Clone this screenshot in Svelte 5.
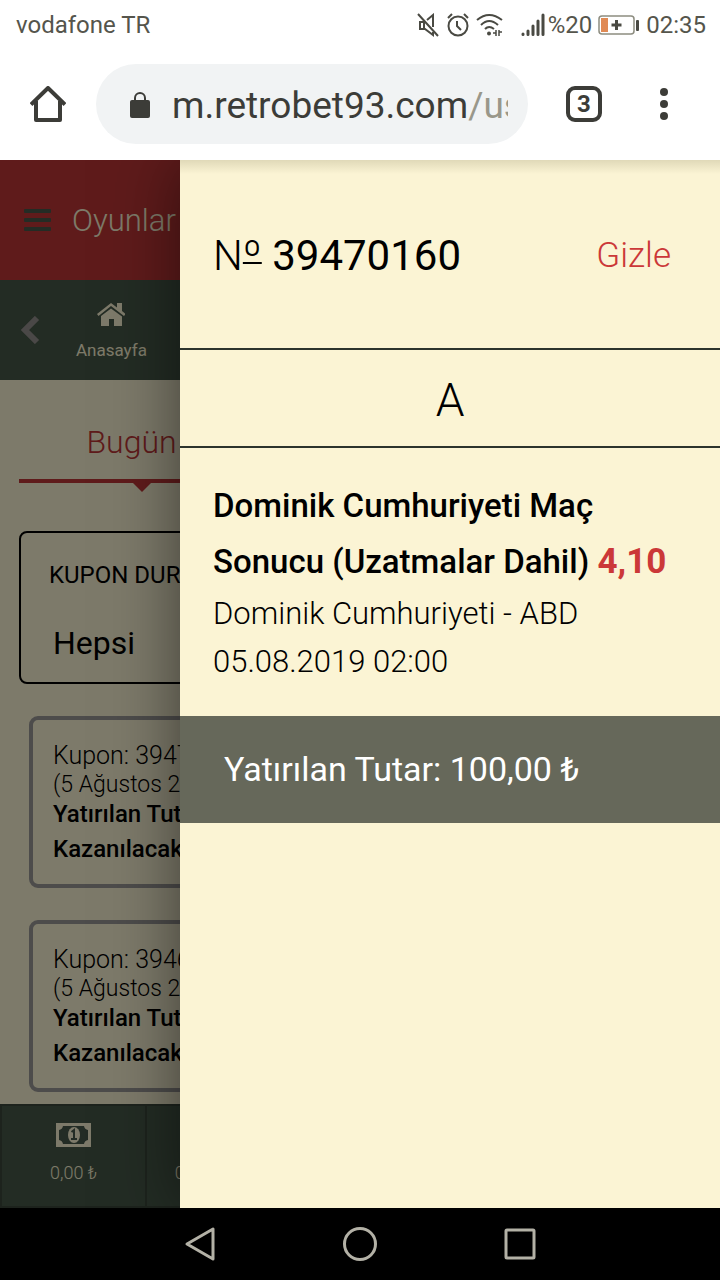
<script>
	let status = $state('Hepsi');

	const coupons = [
		{ id: '39470160', date: '5 Ağustos 2019' },
		{ id: '39469822', date: '5 Ağustos 2019' }
	];
</script>

<div class="screen">
	<div class="status-bar">
		<span>vodafone TR</span>
		<div class="status-icons">
			<svg width="24" height="24" viewBox="0 0 24 24" fill="none" stroke="#4a4a43" stroke-width="2">
				<path d="M2 1L22 23M11 7L17 2V14M17 19V22L9 16H4V9H8V15" />
			</svg>
			<svg width="24" height="24" viewBox="0 0 24 24" fill="none" stroke="#4a4a43" stroke-width="2">
				<circle cx="12" cy="13" r="9.5" />
				<path d="M11 8V13L15 17M2 5L6 1M22 5L18 1" />
			</svg>
			<svg width="28" height="24" viewBox="0 0 28 24" fill="none" stroke="#4a4a43" stroke-width="2">
				<path d="M1 7Q13 -3 26 7M5 12Q13 4 22 12M9 16Q13 12 18 16" />
				<circle cx="13" cy="20.5" r="2" fill="#4a4a43" stroke="none" />
				<path d="M20 17V23M17 20H20M23 17V23M23 19H26" stroke-width="1.5" />
			</svg>
			<svg class="signal" width="24" height="24" viewBox="0 0 24 24" fill="none" stroke="#4a4a43" stroke-width="3" stroke-linecap="round">
				<path d="M2 21V21.5M7 18V21.5M12 13V21.5M17 8V21.5M22 2V21.5" />
			</svg>
			<span class="percent">%20</span>
			<svg width="42" height="22" viewBox="0 0 42 22">
				<rect x="1" y="2" width="35" height="18" rx="3" fill="#fff" stroke="#8d8d80" stroke-width="1.5" />
				<rect x="3" y="4" width="7" height="14" fill="#e08a55" />
				<path d="M18.500 6V16M13.500 11H23.500" stroke="#4a4a43" stroke-width="3" />
				<rect x="38" y="6" width="3" height="11" rx="1" fill="#4a4a43" />
			</svg>
			<span>02:35</span>
		</div>
	</div>

	<div class="toolbar">
		<button class="icon-btn" aria-label="Home">
			<svg width="36" height="36" viewBox="0 0 36 36" fill="none" stroke="#3c3c38" stroke-width="4" stroke-linejoin="round">
				<path d="M1 18.500L18 2L35 18.500" />
				<path d="M6 15V34H30V15" />
			</svg>
		</button>
		<a class="address" href="#top">
			<svg width="20" height="26" viewBox="0 0 20 26">
				<path d="M5 9V6A5 5 0 0 1 15 6V9" fill="none" stroke="#3c3c38" stroke-width="2" />
				<rect y="8" width="20" height="18" rx="2" fill="#3c3c38" />
			</svg>
			<span class="url">m.retrobet93.com<span>/us</span></span>
		</a>
		<button class="tabs-count" aria-label="Open tabs">3</button>
		<button class="menu" aria-label="Menu">
			<svg width="8" height="32" viewBox="0 0 8 32" fill="#3c3c38">
				<circle cx="4" cy="4" r="4" />
				<circle cx="4" cy="16" r="4" />
				<circle cx="4" cy="28" r="4" />
			</svg>
		</button>
	</div>

	<main>
		<div class="page">
			<header>
				<svg width="28" height="24" viewBox="0 0 28 24" fill="#46584a">
					<rect y="1" width="27" height="4" rx="1" />
					<rect y="10" width="27" height="4" rx="1" />
					<rect y="19" width="27" height="4" rx="1" />
				</svg>
				<a href="#games">Oyunlar</a>
			</header>

			<nav class="sub-nav">
				<svg width="20" height="28" viewBox="0 0 20 28" fill="none" stroke="#94908e" stroke-width="6">
					<path d="M17 2L5 14L17 26" />
				</svg>
				<a href="#home">
					<svg width="28" height="24" viewBox="0 0 28 24" fill="#fbf4d4">
						<path d="M0 11L14 0L20 4.500V0H25V8L28.500 11L27 13L14 3L1.500 13Z" />
						<path d="M4 13L14 5.500L25 13.500V23H17V16H12V23H4Z" />
					</svg>
					Anasayfa
				</a>
			</nav>

			<div class="day-tabs">
				<a class="active" href="#today">Bugün</a>
			</div>

			<div class="filter">
				<label for="coupon-status">KUPON DURUMU</label>
				<select id="coupon-status" bind:value={status}>
					<option>Hepsi</option>
				</select>
			</div>

			{#each coupons as coupon}
				<section class="coupon">
					<p>Kupon: {coupon.id}</p>
					<p class="date">({coupon.date})</p>
					<p class="strong">Yatırılan Tutar:</p>
					<p class="strong">Kazanılacak:</p>
				</section>
			{/each}

			<footer>
				<a href="#balance">
					<svg width="35" height="24" viewBox="0 0 35 24">
						<rect width="35" height="24" fill="#fbf4d4" />
						<path d="M7 3H28A5 5 0 0 0 32 7V17A5 5 0 0 0 28 21H7A5 5 0 0 0 3 17V7A5 5 0 0 0 7 3Z" fill="#46584a" />
						<ellipse cx="18" cy="12" rx="6" ry="8" fill="#fbf4d4" />
						<path d="M15.500 9L18 7V16M15 16H21" fill="none" stroke="#46584a" stroke-width="2" />
					</svg>
					0,00 ₺
				</a>
				<a href="#bonus">
					<svg width="35" height="24" viewBox="0 0 35 24"></svg>
					0,00 Bonus
				</a>
			</footer>
		</div>

		<div class="backdrop"></div>

		<aside>
			<div class="slip-head">
				<h1><span>N<u>º</u></span> 39470160</h1>
				<button>Gizle</button>
			</div>
			<div class="group">A</div>
			<div class="bet">
				<h2>Dominik Cumhuriyeti Maç Sonucu (Uzatmalar Dahil) <b>4,10</b></h2>
				<p>Dominik Cumhuriyeti - ABD</p>
				<p>05.08.2019 02:00</p>
			</div>
			<div class="stake">Yatırılan Tutar: 100,00 ₺</div>
		</aside>
	</main>

	<div class="android-nav">
		<button aria-label="Back">
			<svg width="36" height="36" viewBox="0 0 36 36"><path d="M5 18L31 3V33Z" /></svg>
		</button>
		<button aria-label="Home screen">
			<svg width="36" height="36" viewBox="0 0 36 36"><circle cx="18" cy="18" r="15.500" /></svg>
		</button>
		<button aria-label="Recent apps">
			<svg width="36" height="36" viewBox="0 0 36 36"><rect x="4" y="4" width="28" height="28" rx="1" /></svg>
		</button>
	</div>
</div>

<style>
	:global(body) {
		margin: 0;
	}

	.screen {
		display: flex;
		flex-direction: column;
		min-height: 100vh;
		background: #fff;
		font-family: Roboto, "Liberation Sans", sans-serif;
		color: #000;
	}

	a {
		color: inherit;
		text-decoration: none;
	}

	button {
		padding: 0;
		border: 0;
		background: none;
		font-family: inherit;
	}

	svg {
		display: block;
		flex-shrink: 0;
	}

	h1,
	h2,
	p {
		margin: 0;
	}

	.status-bar {
		display: flex;
		align-items: center;
		justify-content: space-between;
		height: 48px;
		padding: 2px 14px 0 16px;
		box-sizing: border-box;
		font-size: 24px;
		color: #55554c;
	}

	.status-icons {
		display: flex;
		align-items: center;
		gap: 6px;
	}

	.signal {
		margin-left: 11px;
	}

	.percent {
		margin-left: -3px;
	}

	.toolbar {
		display: flex;
		align-items: center;
		height: 112px;
		padding-left: 30px;
	}

	.address {
		display: flex;
		flex: 1;
		align-items: center;
		gap: 22px;
		height: 80px;
		min-width: 0;
		margin: 0 38px 0 30px;
		padding: 2px 20px 0 34px;
		box-sizing: border-box;
		border-radius: 40px;
		background: #f1f3f4;
	}

	.url {
		flex: 1;
		font-size: 37px;
		color: #3c3c38;
		white-space: nowrap;
		overflow: hidden;
	}

	.url span {
		color: #99978a;
	}

	.tabs-count {
		display: flex;
		align-items: center;
		justify-content: center;
		width: 36px;
		height: 36px;
		border: 4px solid #3c3c38;
		border-radius: 9px;
		font-size: 24px;
		font-weight: 700;
		color: #3c3c38;
	}

	.menu {
		padding: 0 52px 0 58px;
	}

	main {
		position: relative;
		display: flex;
		flex: 1;
		overflow: hidden;
	}

	.page {
		display: flex;
		flex: 1;
		flex-direction: column;
		min-width: 0;
		background: #fbf4d4;
		white-space: nowrap;
	}

	header {
		display: flex;
		align-items: center;
		gap: 20px;
		height: 120px;
		padding-left: 24px;
		background: #be3636;
		font-size: 31px;
		font-weight: 300;
		color: #fbf4d4;
	}

	.sub-nav {
		display: flex;
		align-items: center;
		gap: 36px;
		height: 100px;
		padding-left: 20px;
		background: #465848;
	}

	.sub-nav a {
		display: flex;
		flex-direction: column;
		align-items: center;
		gap: 12px;
		padding-top: 4px;
		font-size: 17px;
		line-height: 22px;
		color: #fbf4d4;
	}

	.day-tabs {
		display: flex;
		margin: 0 19px;
		border-bottom: 4px solid #be3636;
	}

	.day-tabs a {
		position: relative;
		flex: 0 0 33%;
		height: 99px;
		line-height: 124px;
		text-align: center;
		font-size: 32px;
		font-weight: 300;
		color: #be3636;
	}

	.day-tabs .active::after {
		content: '';
		position: absolute;
		top: 102px;
		left: 50%;
		border: 10px solid transparent;
		border-top-color: #be3636;
	}

	.filter {
		display: flex;
		flex-direction: column;
		gap: 30px;
		margin: 48px 19px 32px;
		padding: 26px 28px 17px;
		border: 2px solid #000;
		border-radius: 8px;
	}

	.filter label {
		font-size: 24px;
		line-height: 32px;
	}

	.filter select {
		appearance: none;
		padding: 0 4px;
		border: 0;
		background: none;
		font-family: inherit;
		font-size: 32px;
		line-height: 44px;
		color: #000;
	}

	.coupon {
		margin: 0 29px 32px;
		padding: 18px 20px 17px;
		border: 4px solid #9a9896;
		border-radius: 9px;
		font-size: 25px;
		font-weight: 300;
		line-height: 35px;
	}

	.coupon:last-of-type {
		margin-bottom: 11px;
	}

	.coupon .date {
		font-size: 23px;
		line-height: 24px;
	}

	.coupon .strong {
		font-size: 24px;
		font-weight: 500;
	}

	footer {
		display: flex;
		gap: 2px;
		height: 104px;
		margin-top: auto;
		padding: 2px;
		box-sizing: border-box;
		background: #3a463a;
	}

	footer a {
		display: flex;
		flex: 0 0 20%;
		flex-direction: column;
		align-items: center;
		justify-content: center;
		gap: 16px;
		padding-bottom: 6px;
		box-sizing: border-box;
		background: #465848;
		font-size: 18px;
		font-weight: 300;
		line-height: 20px;
		color: #fbf4d4;
	}

	.backdrop {
		position: absolute;
		inset: 0;
		background: rgba(0, 0, 0, 0.5);
	}

	aside {
		position: absolute;
		inset: 0 0 0 25%;
		background: linear-gradient(#e0d9b8, #fbf4d4 14px);
		box-shadow: 0 0 64px rgba(0, 0, 0, 0.5);
	}

	.slip-head {
		display: flex;
		align-items: center;
		justify-content: space-between;
		height: 188px;
		padding: 2px 49px 0 33px;
		box-sizing: border-box;
	}

	.slip-head h1 {
		font-size: 42px;
		font-weight: 400;
	}

	.slip-head h1 span {
		font-weight: 300;
	}

	.slip-head u {
		text-decoration-thickness: 2px;
		text-underline-offset: -8px;
		text-decoration-skip-ink: none;
	}

	.slip-head button {
		font-size: 35px;
		font-weight: 300;
		color: #cb3838;
	}

	.group {
		height: 96px;
		border-top: 2px solid #2c332c;
		border-bottom: 2px solid #2c332c;
		line-height: 100px;
		text-align: center;
		font-size: 46px;
		font-weight: 300;
	}

	.bet {
		padding: 30px 33px;
	}

	.bet h2 {
		font-size: 33px;
		font-weight: 500;
		line-height: 56px;
	}

	.bet h2 b {
		font-size: 35px;
		font-weight: 700;
		color: #cb3838;
	}

	.bet p {
		font-size: 31px;
		font-weight: 300;
		line-height: 48px;
	}

	.stake {
		padding-left: 44px;
		background: #66685a;
		font-size: 34px;
		line-height: 107px;
		color: #fff;
	}

	.android-nav {
		display: flex;
		align-items: center;
		justify-content: center;
		gap: 124px;
		height: 72px;
		background: #000;
	}

	.android-nav svg {
		fill: none;
		stroke: #b3b1a6;
		stroke-width: 3;
		stroke-linejoin: round;
	}
</style>
